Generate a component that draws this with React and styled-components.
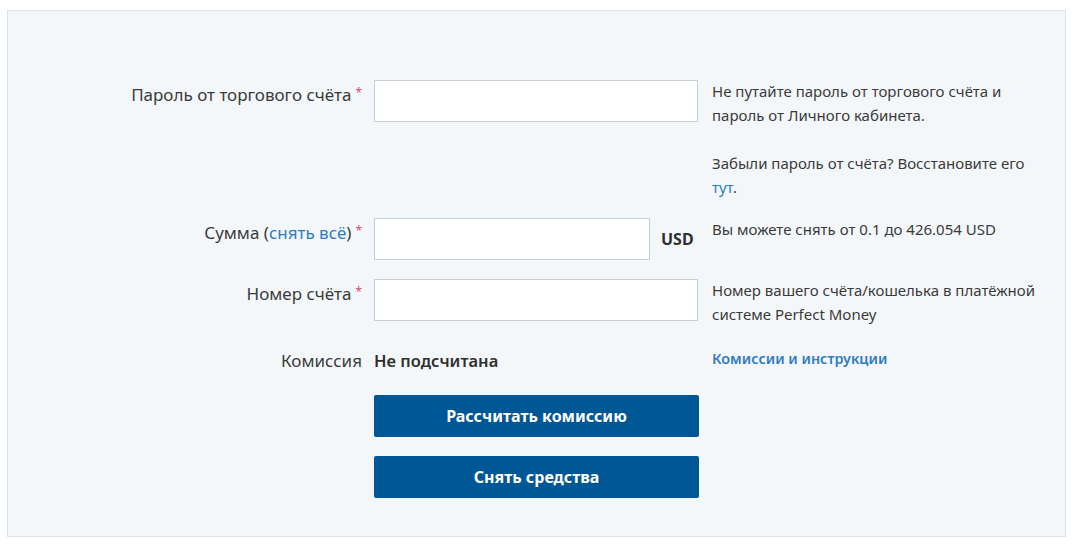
import React from "react";
import styled, { createGlobalStyle } from "styled-components";

const Global = createGlobalStyle`
  html, body { margin: 0; padding: 0; background: #ffffff; }
  body { font-family: "Noto Sans", "Open Sans", sans-serif; color: #3b3b3b; }
  * { box-sizing: border-box; }
`;

const Page = styled.div`
  padding: 10px 0 0 7px;
`;

const Panel = styled.div`
  width: 1059px;
  height: 527px;
  background: #f4f7fa;
  border: 1px solid #dce3e8;
  padding: 69px 0 0 0;
`;

const Form = styled.div`
  display: grid;
  grid-template-columns: 354px 324px 1fr;
  column-gap: 12px;
  row-gap: 19px;
  align-items: start;
`;

const Label = styled.div`
  text-align: right;
  font-size: 17px;
  line-height: 24px;
  padding-top: 3px;
  color: #3b3b3b;
  white-space: nowrap;
`;

const Star = styled.span`
  color: #d2506a;
  font-size: 12px;
  vertical-align: top;
  position: relative;
  top: -2px;
  margin-left: 4px;
`;

const Link = styled.a`
  color: #2e7cc4;
  text-decoration: none;
  font-weight: ${(p) => (p.$strong ? 600 : 400)};
`;

const Field = styled.div`
  display: flex;
  align-items: center;
  gap: 11px;
`;

const Input = styled.input`
  width: ${(p) => p.$w || 324}px;
  height: 42px;
  border: 1px solid #c7cfd6;
  background: #ffffff;
  padding: 0 10px;
  font-size: 15px;
  outline: none;
  border-radius: 0;
`;

const Unit = styled.span`
  font-size: 16px;
  font-weight: 700;
  color: #2f2f2f;
`;

const Hint = styled.div`
  margin-left: 2px;
  margin-top: -1px;
  font-size: 15px;
  line-height: 24px;
  color: #3b3b3b;
  max-width: 336px;
  p { margin: 0; }
  p + p { margin-top: 24px; }
`;

const Value = styled.div`
  font-size: 16.5px;
  font-weight: 600;
  line-height: 31px;
  color: #2f2f2f;
`;

const InfoLabel = styled(Label)`
  line-height: 31px;
  padding-top: 0;
`;

const SideLink = styled.div`
  margin-left: 2px;
  font-size: 14.4px;
  line-height: 27px;
`;

const Buttons = styled.div`
  grid-column: 2;
  display: flex;
  flex-direction: column;
  gap: 19px;
`;

const Button = styled.button`
  width: 325px;
  height: 42px;
  border: none;
  border-radius: 2px;
  background: #005796;
  color: #ffffff;
  font-family: inherit;
  font-size: 16px;
  font-weight: 700;
  cursor: pointer;
`;

export default function App() {
  return (
    <>
      <Global />
      <Page>
        <Panel>
          <Form>
            <Label>
              Пароль от торгового счёта<Star>*</Star>
            </Label>
            <Field>
              <Input type="password" />
            </Field>
            <Hint>
              <p>Не путайте пароль от торгового счёта и пароль от Личного кабинета.</p>
              <p>
                Забыли пароль от счёта? Восстановите его <Link href="#">тут</Link>.
              </p>
            </Hint>

            <Label>
              Сумма (<Link href="#">снять всё</Link>)<Star>*</Star>
            </Label>
            <Field>
              <Input $w={276} />
              <Unit>USD</Unit>
            </Field>
            <Hint>Вы можете снять от 0.1 до 426.054 USD</Hint>

            <Label>
              Номер счёта<Star>*</Star>
            </Label>
            <Field>
              <Input />
            </Field>
            <Hint>Номер вашего счёта/кошелька в платёжной системе Perfect Money</Hint>

            <InfoLabel>Комиссия</InfoLabel>
            <Value>Не подсчитана</Value>
            <SideLink>
              <Link href="#" $strong>
                Комиссии и инструкции
              </Link>
            </SideLink>

            <Buttons>
              <Button type="button">Рассчитать комиссию</Button>
              <Button type="button">Снять средства</Button>
            </Buttons>
          </Form>
        </Panel>
      </Page>
    </>
  );
}
